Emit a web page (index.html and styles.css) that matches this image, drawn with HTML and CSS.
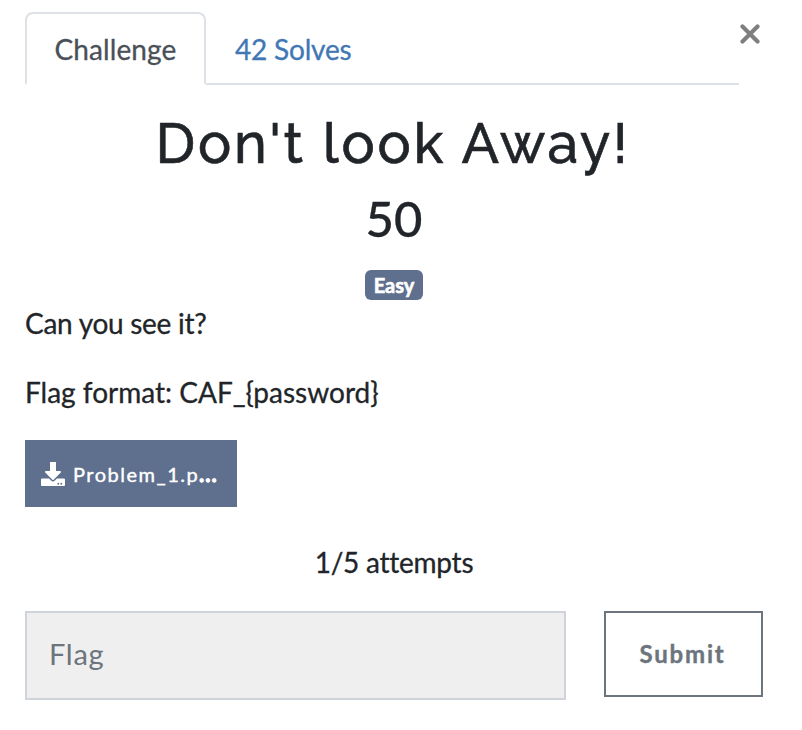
FILE: index.html
```html
<!DOCTYPE html>
<html lang="en">
<head>
<meta charset="utf-8">
<title>Challenge</title>
<link rel="stylesheet" href="styles.css">
</head>
<body>
<main class="modal">
  <header class="top">
    <nav class="tabs">
      <a class="tab active">Challenge</a>
      <a class="tab link">42 Solves</a>
    </nav>
    <svg class="close" viewBox="0 0 20 20"><path d="M2.500 2.500L17.500 17.500M17.500 2.500L2.500 17.500"/></svg>
  </header>
  <h2 class="title">Don't look Away!</h2>
  <h3 class="value">50</h3>
  <div class="tags"><span class="badge">Easy</span></div>
  <p class="desc question">Can you see it?</p>
  <p class="desc format">Flag format: CAF_{password}</p>
  <a class="file">
    <svg class="dl" viewBox="0 0 512 512"><path d="M192 0h128v192h87.700c17.800 0 26.700 21.500 14.100 34.100L269.700 378.300c-7.500 7.500-19.800 7.500-27.300 0L90.100 226.100c-12.600-12.600-3.700-34.100 14.100-34.100H192zM512 376v112c0 13.300-10.700 24-24 24H24c-13.300 0-24-10.700-24-24V376c0-13.300 10.700-24 24-24h146.700l49 49c20.100 20.100 52.500 20.100 72.600 0l49-49H488c13.300 0 24 10.700 24 24zM388 464a20 20 0 1 0-40 0a20 20 0 1 0 40 0zm64 0a20 20 0 1 0-40 0a20 20 0 1 0 40 0z"/></svg>
    <span>Problem_1.p<b class="dots">...</b></span>
  </a>
  <p class="attempts">1/5 attempts</p>
  <form class="row">
    <input class="flag" placeholder="Flag">
    <button class="submit" type="button">Submit</button>
  </form>
</main>
</body>
</html>
```
FILE: styles.css
```css
* { box-sizing: border-box; }
body { margin: 0; background: #fff; color: #212529; font: 28px/42px Lato, sans-serif; font-variant-ligatures: none; -webkit-text-stroke: 0.3px; }
.modal { padding: 12px 39px 0 25px; height: 730px; overflow: hidden; }
h2, h3, p { margin: 0; }
.top { display: flex; height: 73px; }
.tabs { display: flex; width: 714px; flex: none; border-bottom: 2px solid #dee2e6; }
.tab { height: 73px; padding: 14px 27.5px 0; border: 2px solid transparent; white-space: nowrap; }
.active { width: 181px; color: #495057; border-color: #dee2e6 #dee2e6 #fff; border-radius: 8px 8px 0 0; background: #fff; letter-spacing: 0.1px; }
.link { padding-left: 27px; color: #4177b4; letter-spacing: -0.2px; }
.close { width: 20px; height: 20px; flex: none; margin: 12px 0 0 1px; fill: none; stroke: #7f7f7f; stroke-width: 4.2; stroke-linecap: round; }
.title { margin-top: 25px; height: 68px; padding-right: 2px; text-align: center; font: 500 55.5px/68px Raleway, Lato, sans-serif; letter-spacing: 2.8px; white-space: nowrap; -webkit-text-stroke: 0.6px; }
.value { height: 58px; margin-top: 11px; text-align: center; font: 500 49px/58px Lato, sans-serif; }
.tags { display: flex; justify-content: center; height: 30px; margin-top: 23px; }
.badge { width: 58px; height: 30px; border-radius: 6px; background: #5f6f8e; color: #fff; font: 700 20px/31px Lato, sans-serif; text-align: center; -webkit-text-stroke: 0.6px; }
.desc { margin-top: 2px; }
.question { letter-spacing: -0.27px; }
.format { margin-top: 27px; }
.file { display: flex; align-items: center; width: 212px; height: 67px; margin-top: 27px; padding-left: 16px; background: #5f6f8e; color: #fff; font-size: 20px; letter-spacing: 1.5px; white-space: nowrap; }
.file span { -webkit-text-stroke: 0.4px; }
.file .dots { -webkit-text-stroke: 1.3px; }
.dl { width: 24px; height: 24px; margin-right: 8px; fill: #fff; }
.attempts { margin-top: 34px; text-align: center; letter-spacing: -0.25px; }
.row { display: flex; justify-content: space-between; margin: 28px 0 0; }
.flag { width: 541px; height: 89px; padding: 0 22px 4px; border: 2px solid #ced4da; border-radius: 0; background: #efefef; font: 29px Lato, sans-serif; letter-spacing: 0.7px; -webkit-text-stroke: 0; }
.flag::placeholder { color: #6c757d; opacity: 1; }
.submit { width: 159px; height: 86px; padding: 0 2px 1px 0; border: 2px solid #6c757d; background: #fff; color: #6c757d; font: 700 24px Lato, sans-serif; letter-spacing: 1.8px; -webkit-text-stroke: 0.4px; }
```
